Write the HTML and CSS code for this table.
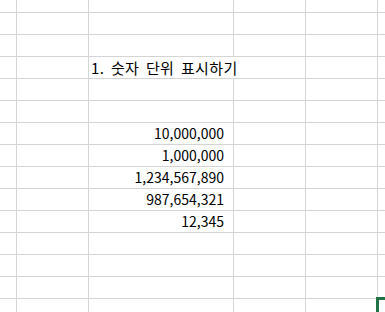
FILE: index.html
```html
<!DOCTYPE html>
<html lang="ko">
<head>
<meta charset="utf-8">
<title>숫자 단위 표시하기</title>
<link rel="stylesheet" href="styles.css">
</head>
<body>
<div class="viewport">
<div class="sheet">
  <!-- row 1 -->
  <div class="c"></div><div class="c"></div><div class="c"></div><div class="c"></div><div class="c"></div><div class="c"></div>
  <!-- row 2 -->
  <div class="c"></div><div class="c"></div><div class="c"></div><div class="c"></div><div class="c"></div><div class="c"></div>
  <!-- row 3 -->
  <div class="c"></div><div class="c"></div><div class="c"></div><div class="c"></div><div class="c"></div><div class="c"></div>
  <!-- row 4 -->
  <div class="c"></div><div class="c"></div><div class="c title">1. 숫자 단위 표시하기</div><div class="c"></div><div class="c"></div><div class="c"></div>
  <!-- row 5 -->
  <div class="c"></div><div class="c"></div><div class="c"></div><div class="c"></div><div class="c"></div><div class="c"></div>
  <!-- row 6 -->
  <div class="c"></div><div class="c"></div><div class="c"></div><div class="c"></div><div class="c"></div><div class="c"></div>
  <!-- row 7 -->
  <div class="c"></div><div class="c"></div><div class="c num">10,000,000</div><div class="c"></div><div class="c"></div><div class="c"></div>
  <!-- row 8 -->
  <div class="c"></div><div class="c"></div><div class="c num">1,000,000</div><div class="c"></div><div class="c"></div><div class="c"></div>
  <!-- row 9 -->
  <div class="c"></div><div class="c"></div><div class="c num">1,234,567,890</div><div class="c"></div><div class="c"></div><div class="c"></div>
  <!-- row 10 -->
  <div class="c"></div><div class="c"></div><div class="c num">987,654,321</div><div class="c"></div><div class="c"></div><div class="c"></div>
  <!-- row 11 -->
  <div class="c"></div><div class="c"></div><div class="c num">12,345</div><div class="c"></div><div class="c"></div><div class="c"></div>
  <!-- row 12 -->
  <div class="c"></div><div class="c"></div><div class="c"></div><div class="c"></div><div class="c"></div><div class="c"></div>
  <!-- row 13 -->
  <div class="c"></div><div class="c"></div><div class="c"></div><div class="c"></div><div class="c"></div><div class="c"></div>
  <!-- row 14 -->
  <div class="c"></div><div class="c"></div><div class="c"></div><div class="c"></div><div class="c"></div><div class="c"></div>
  <!-- row 15 -->
  <div class="c"></div><div class="c"></div><div class="c"></div><div class="c"></div><div class="c"></div><div class="c selected"></div>
</div>
</div>
</body>
</html>
```
FILE: styles.css
```css
html, body {
  margin: 0;
  padding: 0;
  background: #ffffff;
  overflow: hidden;
}

.viewport {
  width: 385px;
  height: 312px;
  overflow: hidden;
}

.sheet {
  display: grid;
  grid-template-columns: 72px 72px 145px 72px 72px 72px;
  grid-auto-rows: 22px;
  margin: -9px 0 0 -55px;
  font-family: "Noto Sans CJK KR", "Noto Sans", sans-serif;
  font-size: 15px;
  color: #000000;
}

.c {
  box-sizing: border-box;
  border-right: 1px solid #d4d4d4;
  border-bottom: 1px solid #d4d4d4;
  line-height: 21px;
  white-space: nowrap;
  position: relative;
}

.title {
  padding-left: 2px;
  border-right-color: #ffffff;
  overflow: visible;
  z-index: 1;
  letter-spacing: 0.4px;
  word-spacing: 2px;
}

.num {
  text-align: right;
  padding-right: 9px;
  font-size: 14px;
}

.selected::before {
  content: "";
  position: absolute;
  left: -2px;
  top: -2px;
  width: 100px;
  height: 100px;
  border: 3px solid #217346;
  box-sizing: border-box;
}
```
